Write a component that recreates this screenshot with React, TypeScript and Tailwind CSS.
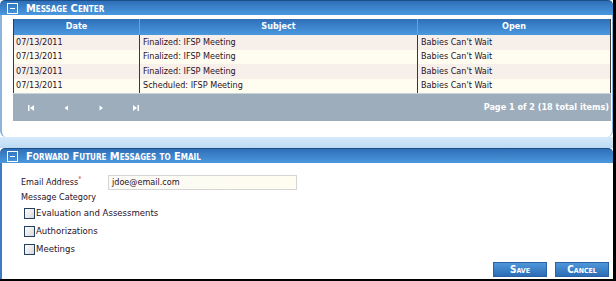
import { PropsWithChildren } from "react";

const rows = [
  { date: "07/13/2011", subject: "Finalized: IFSP Meeting", open: "Babies Can't Wait" },
  { date: "07/13/2011", subject: "Finalized: IFSP Meeting", open: "Babies Can't Wait" },
  { date: "07/13/2011", subject: "Finalized: IFSP Meeting", open: "Babies Can't Wait" },
  { date: "07/13/2011", subject: "Scheduled: IFSP Meeting", open: "Babies Can't Wait" },
];

const categories = ["Evaluation and Assessments", "Authorizations", "Meetings"];

const MinusBox = () => (
  <span className="flex h-[11px] w-[11px] items-center justify-center border border-white">
    <span className="h-px w-[5px] bg-white" />
  </span>
);

const PanelHeader = ({ children }: PropsWithChildren) => (
  <div className="flex h-[15px] items-center gap-[8px] rounded-t-[5px] border-t border-[#1b4f8a] bg-gradient-to-b from-[#2f6fb8] to-[#4a98de] pl-[7px]">
    <MinusBox />
    <span className="text-[11px] font-bold leading-none text-white [font-variant:small-caps]">
      {children}
    </span>
  </div>
);

const PagerIcon = ({ d }: { d: string }) => (
  <svg width="8" height="8" viewBox="0 0 8 8" className="fill-white">
    <path d={d} />
  </svg>
);

const Btn = ({ children }: PropsWithChildren) => (
  <button className="flex h-[15px] w-[54px] items-center justify-center border border-[#2b62a3] bg-gradient-to-b from-[#4f97da] to-[#2c6db5] text-[10px] font-bold text-white [font-variant:small-caps]">
    {children}
  </button>
);

export default function App() {
  return (
    <div className="flex h-[281px] w-[616px] flex-col border-b-2 border-r-[3px] border-black bg-white font-['DejaVu_Sans_Condensed','DejaVu_Sans',sans-serif] text-[9px] text-[#2a1028]">
      {/* Message center */}
      <PanelHeader>Message Center</PanelHeader>
      <div className="flex h-[122px] flex-col rounded-b-[6px] border-l-2 border-r border-[#8db4da] pl-[11px] pr-px pt-[4px]">
        <div className="border-x border-[#3a3a3a]">
          <div className="grid h-[16px] grid-cols-[126px_278px_1fr] bg-gradient-to-b from-[#2f6fb8] to-[#4a98de] font-bold text-white">
            <div className="flex items-center justify-center border-r border-[#6aa2d8]">Date</div>
            <div className="flex items-center justify-center border-r border-[#6aa2d8]">Subject</div>
            <div className="flex items-center justify-center">Open</div>
          </div>
          {rows.map((r, i) => (
            <div
              key={i}
              className={`grid grid-cols-[126px_278px_1fr] ${i % 2 === 0 ? "h-[15px] bg-[#f7efe9]" : "h-[14px] bg-[#fffdf0]"}`}
            >
              <div className="flex items-center border-r border-[#3a3a3a] pl-[2px]">{r.date}</div>
              <div className="flex items-center border-r border-[#3a3a3a] pl-[3px]">{r.subject}</div>
              <div className="flex items-center pl-[3px]">{r.open}</div>
            </div>
          ))}
        </div>
        <div className="flex h-[28px] items-center justify-between border-t border-[#c9d3dc] bg-[#9eadbb] pr-[2px]">
          <div className="flex items-center gap-[27px] pl-[14px]">
            <PagerIcon d="M1 1h1.5v6H1zM7 1v6L3 4z" />
            <PagerIcon d="M6 1.5v5L2.5 4z" />
            <PagerIcon d="M2.5 1.5v5L6 4z" />
            <PagerIcon d="M1 1v6l4-3zM5.5 1H7v6H5.5z" />
          </div>
          <span className="font-bold text-white">Page 1 of 2 (18 total items)</span>
        </div>
      </div>
      <div className="h-[11px] bg-gradient-to-b from-[#d6eafa] to-[#bcd9f2]" />

      {/* Forward messages */}
      <PanelHeader>Forward Future Messages to Email</PanelHeader>
      <div className="flex flex-1 flex-col border-l-2 border-[#3d7cc2] pl-[19px] pr-[4px] pt-[12px]">
        <div className="flex items-center">
          <span className="w-[87px] font-medium">
            Email Address<sup className="text-[#c0272d]">*</sup>
          </span>
          <div className="flex h-[15px] w-[189px] items-center border border-[#d5d5d5] bg-gradient-to-r from-[#fbfbf6] to-[#fffdf0] pl-[3px]">
            jdoe@email.com
          </div>
        </div>
        <div className="mt-[1px] leading-[12px]">Message Category</div>
        <div className="mt-[4px] flex flex-col gap-[6px] pl-[3px]">
          {categories.map((c) => (
            <label key={c} className="flex h-[12px] items-center gap-[1px] text-[9.5px] leading-none">
              <span className="h-[11px] w-[11px] border border-[#24405e] bg-gradient-to-br from-white to-[#d8d8d8]" />
              {c}
            </label>
          ))}
        </div>
        <div className="mt-auto mb-[2px] flex justify-end gap-[8px]">
          <Btn>Save</Btn>
          <Btn>Cancel</Btn>
        </div>
      </div>
    </div>
  );
}
